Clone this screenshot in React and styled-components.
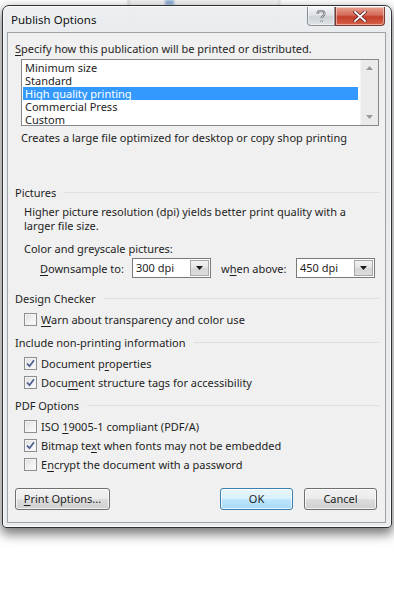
import styled, { createGlobalStyle } from 'styled-components'

const Global = createGlobalStyle`
  html, body {
    margin: 0;
    padding: 0;
    background: #ffffff;
  }
  body {
    font-family: "Noto Sans", "Open Sans", "DejaVu Sans", sans-serif;
    font-size: 11px;
    color: #1e1e1e;
  }
`

const Screen = styled.div`
  position: relative;
  width: 394px;
  height: 609px;
  overflow: hidden;
  padding-top: 5px;
  box-sizing: border-box;
`

const Backdrop = styled.div`
  position: absolute;
  left: 128px;
  top: -10px;
  width: 150px;
  height: 40px;
  background: #f4f4f4;
  border-left: 1px solid #b8b8b8;
  border-right: 1px solid #c8c8c8;
  filter: blur(1px);
`

const BackdropIcon = styled.div`
  position: absolute;
  left: 36px;
  top: 10px;
  width: 9px;
  height: 5px;
  background: #8fb0d8;
`

const Window = styled.div`
  position: relative;
  width: 388px;
  margin-left: 2px;
  border: 1px solid #2f3235;
  border-radius: 7px 7px 4px 4px;
  background: linear-gradient(180deg, rgba(236,239,242,0.93) 0px, rgba(231,234,237,0.96) 30px, #e9ecef 100%);
  box-shadow: 0 5px 12px 1px rgba(0, 0, 0, 0.55), inset 0 0 0 1px rgba(255,255,255,0.75);
`

const TitleBar = styled.div`
  display: flex;
  align-items: flex-start;
  height: 26px;
  padding-left: 8px;
`

const Title = styled.div`
  margin-top: 6px;
  font-size: 11.5px;
  line-height: 15px;
  color: #111;
`

const CaptionButtons = styled.div`
  display: flex;
  margin-left: auto;
  margin-right: 6px;
  margin-top: 1px;
`

const CaptionButton = styled.div`
  width: ${p => p.$w}px;
  height: 18px;
  display: flex;
  align-items: center;
  justify-content: center;
  border: 1px solid ${p => (p.$close ? '#7c3a32' : '#8a8f94')};
  border-top: none;
  border-radius: ${p => (p.$close ? '0 0 4px 0' : '0 0 0 4px')};
  background: ${p =>
    p.$close
      ? 'linear-gradient(180deg, #e8a293 0%, #d46a58 45%, #c33d2a 55%, #d6624b 100%)'
      : 'linear-gradient(180deg, #f2f4f6 0%, #dfe3e7 45%, #cdd2d7 55%, #dfe3e6 100%)'};
  box-shadow: inset 0 0 0 1px rgba(255,255,255,0.45);
`

const Client = styled.div`
  margin: 0 5px 4px 4px;
  border: 1px solid #9ea3a8;
  background: #f0f0f0;
  padding: 0 6px 12px 7px;
`

const Label = styled.div`
  line-height: 15px;
  margin-top: ${p => p.$mt || 0}px;
  margin-left: ${p => p.$ml || 0}px;
  white-space: nowrap;
`

const Key = styled.span`
  text-decoration: underline;
  text-underline-offset: 2px;
`

const ListBox = styled.div`
  display: flex;
  margin: 3px 0 0 6px;
  height: 65px;
  border: 1px solid #828790;
  background: #fff;
`

const ListItems = styled.div`
  flex: 1;
  padding: 1px 2px 0 1px;
`

const ListItem = styled.div`
  height: 13px;
  line-height: 13px;
  padding-left: 2px;
  background: ${p => (p.$selected ? '#3399ff' : 'transparent')};
  color: ${p => (p.$selected ? '#fff' : '#1e1e1e')};
  white-space: nowrap;
`

const ScrollBar = styled.div`
  width: 17px;
  background: #ebebeb;
  display: flex;
  flex-direction: column;
  justify-content: space-between;
  align-items: center;
  padding: 6px 0;
  border-left: 1px solid #f4f4f4;
`

const SectionHead = styled.div`
  display: flex;
  align-items: center;
  gap: 8px;
  line-height: 15px;
  margin-top: ${p => p.$mt}px;
  &::after {
    content: '';
    flex: 1;
    height: 1px;
    background: #dcdfe3;
  }
`

const Para = styled.div`
  margin: 5px 0 0 9px;
  line-height: 14px;
  width: 345px;
`

const DpiRow = styled.div`
  display: flex;
  align-items: center;
  margin: 2px 0 0 25px;
  height: 20px;
`

const DpiLabel = styled.div`
  width: ${p => p.$w}px;
  padding-left: ${p => p.$pl || 0}px;
  white-space: nowrap;
`

const Combo = styled.div`
  display: flex;
  width: 79px;
  height: 20px;
  box-sizing: border-box;
  border: 1px solid #7a7a7a;
  background: #fff;
`

const ComboText = styled.div`
  flex: 1;
  padding-left: 3px;
  line-height: 18px;
`

const ComboButton = styled.div`
  width: 17px;
  margin: 1px;
  border: 1px solid #a6a6a6;
  background: linear-gradient(180deg, #f3f3f3 0%, #e3e3e3 50%, #d6d6d6 51%, #dcdcdc 100%);
  display: flex;
  align-items: center;
  justify-content: center;
`

const CheckRow = styled.div`
  display: flex;
  align-items: center;
  height: 19px;
  margin-left: 9px;
  margin-top: ${p => p.$mt || 0}px;
  gap: 4px;
  white-space: nowrap;
`

const Box = styled.div`
  width: 13px;
  height: 13px;
  box-sizing: border-box;
  border: 1px solid #8e8f8f;
  background: linear-gradient(135deg, #dcdcdc 0%, #f0f0f0 50%, #fbfbfb 100%);
  box-shadow: inset 0 0 0 1px #f4f4f4;
  display: flex;
  align-items: center;
  justify-content: center;
`

const ButtonRow = styled.div`
  display: flex;
  margin-top: 14px;
  margin-right: 2px;
  gap: 11px;
`

const Button = styled.div`
  width: ${p => p.$w}px;
  height: 22px;
  box-sizing: border-box;
  border: 1px solid ${p => (p.$default ? '#3c7fb1' : '#707070')};
  border-radius: 3px;
  background: ${p =>
    p.$default
      ? 'linear-gradient(180deg, #eaf6fd 0%, #d9f0fc 50%, #bee6fd 51%, #a7d9f5 100%)'
      : 'linear-gradient(180deg, #f2f2f2 0%, #ebebeb 50%, #dddddd 51%, #cfcfcf 100%)'};
  box-shadow: inset 0 0 0 1px rgba(255,255,255,0.7);
  text-align: center;
  line-height: 20px;
  margin-left: ${p => (p.$push ? 'auto' : '0')};
`

const Arrow = ({ up, color = '#1a1a1a', w = 7 }) => (
  <svg width={w} height="4" viewBox="0 0 7 4">
    <path d={up ? 'M0 4 L3.5 0 L7 4 Z' : 'M0 0 L7 0 L3.5 4 Z'} fill={color} />
  </svg>
)

const Check = ({ checked }) => (
  <Box>
    {checked && (
      <svg width="9" height="9" viewBox="0 0 9 9">
        <path d="M1 4.5 L3.5 7.2 L8 1.2" fill="none" stroke="#4a5c8f" strokeWidth="1.7" />
      </svg>
    )}
  </Box>
)

const qualities = ['Minimum size', 'Standard', 'High quality printing', 'Commercial Press', 'Custom']

const App = () => (
  <>
    <Global />
    <Screen>
      <Backdrop>
        <BackdropIcon />
      </Backdrop>
      <Window>
        <TitleBar>
          <Title>Publish Options</Title>
          <CaptionButtons>
            <CaptionButton $w={26}>
              <svg width="10" height="13" viewBox="0 0 10 13">
                <path
                  d="M1.5 4 C1.5 1.5 3.5 1 5 1 C7 1 8.5 2 8.5 4 C8.5 6 5.5 6.3 5.5 8.3 M5.5 10.5 L5.5 12"
                  fill="none"
                  stroke="#5b6168"
                  strokeWidth="2"
                />
                <path
                  d="M1.5 4 C1.5 1.5 3.5 1 5 1 C7 1 8.5 2 8.5 4 C8.5 6 5.5 6.3 5.5 8.3 M5.5 10.5 L5.5 12"
                  fill="none"
                  stroke="#f4f4f4"
                  strokeWidth="0.8"
                />
              </svg>
            </CaptionButton>
            <CaptionButton $w={48} $close>
              <svg width="14" height="11" viewBox="0 0 14 11">
                <path d="M2 1 L12 10 M12 1 L2 10" stroke="#5a2a24" strokeWidth="3.4" strokeLinecap="square" />
                <path d="M2 1 L12 10 M12 1 L2 10" stroke="#ffffff" strokeWidth="1.8" strokeLinecap="square" />
              </svg>
            </CaptionButton>
          </CaptionButtons>
        </TitleBar>
        <Client>
          <Label $mt={8}>
            <Key>S</Key>pecify how this publication will be printed or distributed.
          </Label>
          <ListBox>
            <ListItems>
              {qualities.map(q => (
                <ListItem key={q} $selected={q === 'High quality printing'}>
                  {q}
                </ListItem>
              ))}
            </ListItems>
            <ScrollBar>
              <Arrow up color="#9a9a9a" />
              <Arrow color="#9a9a9a" />
            </ScrollBar>
          </ListBox>
          <Label $mt={4} $ml={6}>
            Creates a large file optimized for desktop or copy shop printing
          </Label>

          <SectionHead $mt={40}>Pictures</SectionHead>
          <Para>Higher picture resolution (dpi) yields better print quality with a larger file size.</Para>
          <Label $mt={8} $ml={9}>
            Color and greyscale pictures:
          </Label>
          <DpiRow>
            <DpiLabel $w={92}>
              <Key>D</Key>ownsample to:
            </DpiLabel>
            <Combo>
              <ComboText>300 dpi</ComboText>
              <ComboButton>
                <Arrow />
              </ComboButton>
            </Combo>
            <DpiLabel $w={75} $pl={10}>
              w<Key>h</Key>en above:
            </DpiLabel>
            <Combo>
              <ComboText>450 dpi</ComboText>
              <ComboButton>
                <Arrow />
              </ComboButton>
            </Combo>
          </DpiRow>

          <SectionHead $mt={13}>Design Checker</SectionHead>
          <CheckRow $mt={4}>
            <Check />
            <span>
              <Key>W</Key>arn about transparency and color use
            </span>
          </CheckRow>

          <SectionHead $mt={6}>Include non-printing information</SectionHead>
          <CheckRow $mt={4}>
            <Check checked />
            <span>
              Document p<Key>r</Key>operties
            </span>
          </CheckRow>
          <CheckRow>
            <Check checked />
            <span>
              Docu<Key>m</Key>ent structure tags for accessibility
            </span>
          </CheckRow>

          <SectionHead $mt={6}>PDF Options</SectionHead>
          <CheckRow $mt={4}>
            <Check />
            <span>
              ISO <Key>1</Key>9005-1 compliant (PDF/A)
            </span>
          </CheckRow>
          <CheckRow>
            <Check checked />
            <span>
              Bitmap te<Key>x</Key>t when fonts may not be embedded
            </span>
          </CheckRow>
          <CheckRow>
            <Check />
            <span>
              E<Key>n</Key>crypt the document with a password
            </span>
          </CheckRow>

          <ButtonRow>
            <Button $w={95}>
              <Key>P</Key>rint Options...
            </Button>
            <Button $w={73} $default $push>
              OK
            </Button>
            <Button $w={73}>Cancel</Button>
          </ButtonRow>
        </Client>
      </Window>
    </Screen>
  </>
)

export default App
